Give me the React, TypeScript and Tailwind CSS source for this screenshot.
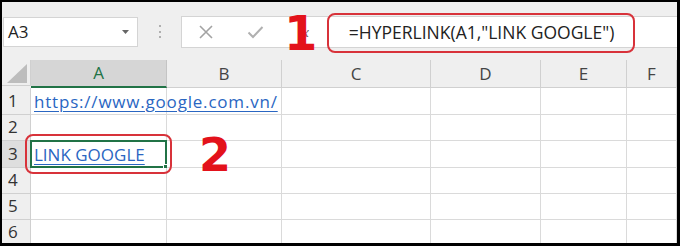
import type { ReactNode } from 'react';

const cols = ['A', 'B', 'C', 'D', 'E', 'F'];
const rowHeights = ['h-[27px]', 'h-[26px]', 'h-[27px]', 'h-[26px]', 'h-[26px]', 'h-[25px]'];

function ColHeader({ label, selected }: { label: string; selected?: boolean }) {
  return (
    <div
      className={`flex items-center justify-center border-r border-b text-[17px] ${
        selected
          ? 'bg-[#d6d6d6] border-r-[#c4c4c4] border-b-2 border-b-[#217346] text-[#217346]'
          : 'bg-[#efefef] border-[#d0d0d0] text-[#444]'
      }`}
    >
      {label}
    </div>
  );
}

function Cell({ children, className = '' }: { children?: ReactNode; className?: string }) {
  return (
    <div className={`relative flex items-center border-r border-b border-[#dadada] bg-white ${className}`}>
      {children}
    </div>
  );
}

export default function App() {
  return (
    <div className="w-[680px] h-[246px] bg-black pt-[2px] pl-[2px] pr-[3px] pb-[3px] font-['Open_Sans',sans-serif]">
      <div className="relative flex h-full w-full flex-col overflow-hidden bg-[#efefef]">
        {/* toolbar: name box + formula bar */}
        <div className="flex h-[58px] shrink-0 items-start pt-[14px]">
          <div className="ml-[1px] mt-[1px] flex h-[30px] w-[135px] items-center justify-between border border-[#d4d4d4] bg-white pl-[4px] pr-[8px]">
            <span className="text-[17px] text-[#222]">A3</span>
            <svg width="7" height="4" viewBox="0 0 7 4">
              <path d="M0 0 H7 L3.5 4 Z" fill="#666" />
            </svg>
          </div>
          <div className="ml-[21px] mt-[9px] flex h-[13px] w-[3px] flex-col justify-between">
            <span className="h-[2px] w-[2px] rounded-full bg-[#9a9a9a]" />
            <span className="h-[2px] w-[2px] rounded-full bg-[#9a9a9a]" />
            <span className="h-[2px] w-[2px] rounded-full bg-[#9a9a9a]" />
          </div>
          <div className="ml-[19px] flex h-[32px] flex-1 items-center border border-[#d4d4d4] border-r-0 bg-white">
            <svg className="ml-[16px]" width="16" height="14" viewBox="0 0 16 14">
              <path d="M2 1 L14 13 M14 1 L2 13" stroke="#a3a3a3" strokeWidth="1.6" />
            </svg>
            <svg className="ml-[33px]" width="17" height="14" viewBox="0 0 17 14">
              <path d="M1.5 7.5 L6 12 L15.5 2" stroke="#b0b0b0" strokeWidth="2" fill="none" />
            </svg>
            <span className="ml-[34px] font-['Liberation_Serif',serif] text-[15px] italic text-[#555]">fx</span>
            <span className="ml-[40px] whitespace-nowrap text-[17.5px] text-[#222]">=HYPERLINK(A1,"LINK GOOGLE")</span>
          </div>
        </div>

        {/* sheet grid */}
        <div className="grid flex-1 grid-cols-[29px_136px_115px_149px_110px_86px_1fr] content-start">
          <div className="flex h-[26px] items-end justify-end border-r border-b border-[#d0d0d0] bg-[#efefef] pb-[2px] pr-[3px]">
            <svg width="20" height="19" viewBox="0 0 20 19">
              <path d="M20 0 V19 H0 Z" fill="#bdbdbd" />
            </svg>
          </div>
          {cols.map((c) => (
            <ColHeader key={c} label={c} selected={c === 'A'} />
          ))}

          {rowHeights.map((h, i) => {
            const row = i + 1;
            return (
              <div key={row} className="contents">
                <div
                  className={`${h} flex items-center border-r border-b border-[#d0d0d0] pl-[6px] text-[17px] text-[#333] ${
                    row === 3 ? 'bg-[#dedede]' : 'bg-[#efefef]'
                  }`}
                >
                  {row}
                </div>
                {cols.map((c) => (
                  <Cell key={c} className={h}>
                    {c === 'A' && row === 1 && (
                      <span className="relative z-10 whitespace-nowrap pl-[3px] pt-[2px] text-[17px] tracking-[0.8px] text-[#2a66c2] underline underline-offset-[3px]">
                        https://www.google.com.vn/
                      </span>
                    )}
                    {c === 'A' && row === 3 && (
                      <>
                        <span className="whitespace-nowrap pl-[3px] pt-[2px] text-[17px] text-[#2a66c2] underline underline-offset-[3px]">
                          LINK GOOGLE
                        </span>
                        <div className="absolute -left-[1px] -top-[1px] -right-[1px] -bottom-[1px] border-2 border-[#217346]" />
                        <div className="absolute -right-[3px] -bottom-[3px] h-[6px] w-[6px] border border-white bg-[#217346]" />
                      </>
                    )}
                  </Cell>
                ))}
              </div>
            );
          })}
        </div>

        {/* annotations */}
        <div className="absolute left-[325px] top-[11px] h-[40px] w-[308px] rounded-[8px] border-2 border-[#d8323a]" />
        <div className="absolute left-[23px] top-[132px] h-[40px] w-[147px] rounded-[8px] border-2 border-[#d8323a]" />
        <div className="absolute left-[282px] top-[7px] font-['DejaVu_Sans',sans-serif] text-[48px] font-bold leading-none text-[#e3121b]">
          1
        </div>
        <div className="absolute left-[197px] top-[130px] font-['DejaVu_Sans',sans-serif] text-[46px] font-bold leading-none text-[#e3121b]">
          2
        </div>
      </div>
    </div>
  );
}
